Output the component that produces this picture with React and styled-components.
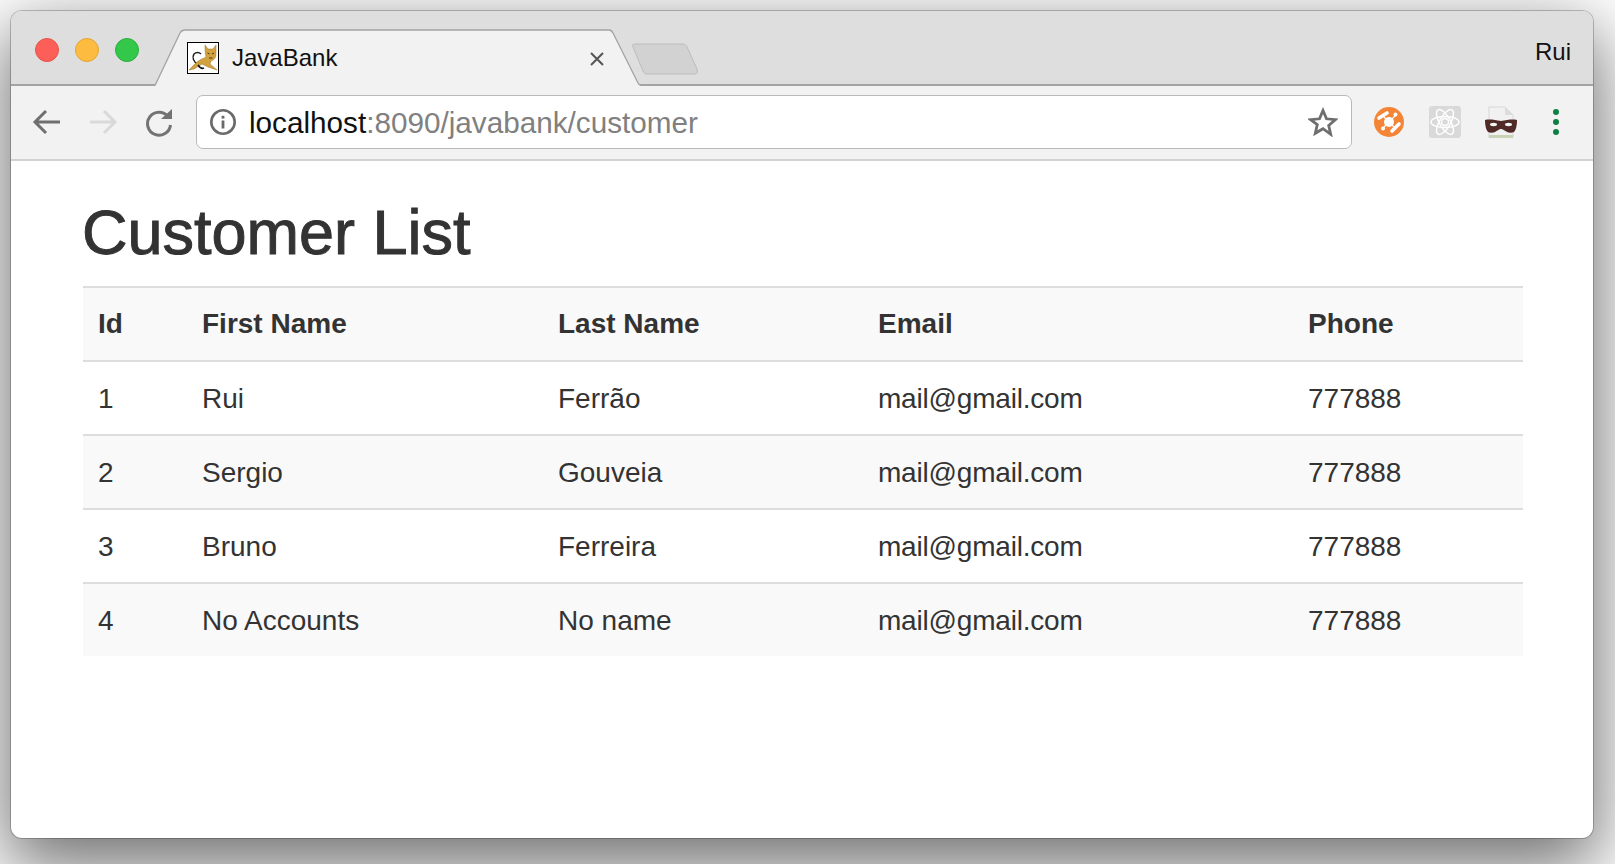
import React from "react";
import styled, { createGlobalStyle } from "styled-components";

const Global = createGlobalStyle`
  html, body { margin: 0; padding: 0; background: #fff; }
  body { font-family: "Liberation Sans", Arial, sans-serif; overflow: hidden; }
`;

const Desktop = styled.div`
  width: 1615px;
  height: 864px;
  padding: 11px 22px 26px 11px;
  box-sizing: border-box;
  overflow: hidden;
`;

const BrowserWindow = styled.div`
  height: 827px;
  width: 1582px;
  border-radius: 11px;
  background: #fff;
  display: flex;
  flex-direction: column;
  overflow: hidden;
  box-shadow: 0 0 0 1px rgba(0, 0, 0, 0.22), 0 24px 70px 6px rgba(0, 0, 0, 0.56);
`;

const TitleBar = styled.div`
  height: 75px;
  box-sizing: border-box;
  flex: none;
  background: #dedede;
  border-bottom: 2px solid #a3a3a3;
  display: flex;
  align-items: flex-end;
  padding: 0 22px 0 24px;
`;

const Lights = styled.div`
  display: flex;
  gap: 16px;
  align-self: flex-start;
  margin-top: 27px;
`;

const Light = styled.span`
  width: 24px;
  height: 24px;
  border-radius: 50%;
  box-sizing: border-box;
  background: ${(p) => p.$fill};
  border: 1px solid ${(p) => p.$edge};
`;

const Tab = styled.div`
  position: relative;
  width: 486px;
  height: 57px;
  margin: 0 0 -2px 16px;
  display: flex;
  align-items: center;
  padding: 0 36px 0 32px;
  box-sizing: border-box;
  color: #111;
  font-size: 24px;
`;

const TabShape = styled.svg`
  position: absolute;
  left: 0;
  top: 0;
  width: 486px;
  height: 57px;
`;

const Favicon = styled.svg`
  position: relative;
  width: 32px;
  height: 32px;
  flex: none;
  margin-top: 1px;
`;

const TabTitle = styled.span`
  position: relative;
  margin-left: 13px;
  flex: 1;
`;

const CloseIcon = styled.svg`
  position: relative;
  width: 14px;
  height: 14px;
  flex: none;
  margin-top: 2px;
  margin-right: 1px;
`;

const NewTab = styled.svg`
  width: 68px;
  height: 34px;
  flex: none;
  margin: 0 0 8px -10px;
`;

const UserName = styled.span`
  margin-left: auto;
  align-self: flex-start;
  margin-top: 27px;
  font-size: 24px;
  line-height: 28px;
  color: #111;
`;

const ToolBar = styled.div`
  height: 75px;
  flex: none;
  box-sizing: border-box;
  background: #f2f2f2;
  border-bottom: 2px solid #d2d2d2;
  display: flex;
  align-items: center;
  padding: 0 0 1px 0;
`;

const NavIcon = styled.svg`
  width: 30px;
  height: 30px;
  flex: none;
  margin-left: ${(p) => p.$gap}px;
`;

const Omnibox = styled.div`
  width: 1156px;
  height: 54px;
  margin-left: 22px;
  box-sizing: border-box;
  flex: none;
  background: #fff;
  border: 1px solid #b9b9b9;
  border-radius: 7px;
  display: flex;
  align-items: center;
  padding: 0 13px 0 12px;
`;

const InfoIcon = styled.svg`
  width: 28px;
  height: 28px;
  flex: none;
`;

const Url = styled.div`
  margin-left: 12px;
  padding-top: 1px;
  flex: 1;
  font-size: 29.7px;
  color: #808080;
  white-space: nowrap;
`;

const UrlHost = styled.span`
  color: #111;
`;

const StarIcon = styled.svg`
  width: 30px;
  height: 30px;
  flex: none;
`;

const Extensions = styled.div`
  display: flex;
  align-items: center;
  gap: 24px;
  margin-left: 21px;
`;

const ExtIcon = styled.svg`
  width: 32px;
  height: 32px;
  flex: none;
`;

const MenuDots = styled.div`
  display: flex;
  flex-direction: column;
  gap: 4px;
  margin-left: 12px;
`;

const MenuDot = styled.span`
  width: 6px;
  height: 6px;
  border-radius: 50%;
  background: #0b8043;
`;

const Page = styled.main`
  flex: 1;
  padding: 0 70px 0 72px;
  color: #333;
`;

const Heading = styled.h1`
  margin: 0 0 0 -1px;
  height: 125px;
  box-sizing: border-box;
  padding-top: 36px;
  font-size: 63px;
  line-height: 70px;
  font-weight: 400;
  color: #333;
  -webkit-text-stroke: 1px #333;
`;

const Table = styled.table`
  width: 1440px;
  table-layout: fixed;
  border-collapse: collapse;
  font-size: 28px;
  border-top: 2px solid #ddd;
`;

const HeadCell = styled.th`
  height: 72px;
  padding: 0 0 0 15px;
  text-align: left;
  font-weight: 700;
  color: #333;
  border-bottom: 2px solid #ddd;
`;

const Row = styled.tr`
  background: ${(p) => (p.$striped ? "#f9f9f9" : "#fff")};
`;

const Cell = styled.td`
  height: 70px;
  padding: 2px 0 0 15px;
  color: #333;
  border-top: 2px solid #ddd;
  letter-spacing: ${(p) => p.$tracking || 0}px;
`;

const customers = [
  { id: 1, first: "Rui", last: "Ferrão" },
  { id: 2, first: "Sergio", last: "Gouveia" },
  { id: 3, first: "Bruno", last: "Ferreira" },
  { id: 4, first: "No Accounts", last: "No name" },
];

const columns = [
  { name: "Id", width: 104 },
  { name: "First Name", width: 356 },
  { name: "Last Name", width: 320 },
  { name: "Email", width: 430 },
  { name: "Phone", width: 230 },
];

const TomcatIcon = () => (
  <Favicon viewBox="0 0 32 32">
    <rect x="0.5" y="0.5" width="31" height="31" fill="#fff" stroke="#000" />
    <path d="M11 22C6 20 5 15 7 12c2-2 5-2 7 0" fill="none" stroke="#222" strokeWidth="1.500" />
    <path d="M18 3l3 4h5l3-4v9c0 4-2 6-5 7l-1 3 7 6-9-3-6-3-8 5-5 1c4-4 7-8 11-10 3-2 5-2 6-3-1-4-1-8-1-12z" fill="#d2a23f" stroke="#96722a" strokeWidth="0.500" />
    <path d="M20.500 11l2 1M27 11l-2 1M22 16h3.500" stroke="#4a3512" strokeWidth="1" />
    <path d="M11 23c2 3 4 4 6 3" fill="none" stroke="#111" strokeWidth="1.500" />
  </Favicon>
);

const OrangeExt = () => (
  <ExtIcon viewBox="0 0 32 32">
    <circle cx="16" cy="16" r="15" fill="#f58536" />
    <path d="M9 9l14 14M23 9L9 23" stroke="#fff" strokeWidth="1.200" />
    <circle cx="16" cy="16" r="5" fill="#fff" />
    <path d="M6 12l8-5M19 25l7-7" stroke="#fff" strokeWidth="3.600" strokeLinecap="round" />
    <circle cx="22.500" cy="8.500" r="2" fill="#fff" />
    <circle cx="10" cy="22.500" r="2" fill="#fff" />
  </ExtIcon>
);

const ReactExt = () => (
  <ExtIcon viewBox="0 0 32 32">
    <rect width="32" height="32" rx="3" fill="#d9d9d9" />
    <g fill="none" stroke="#fff" strokeWidth="1.500">
      <ellipse cx="16" cy="16" rx="14" ry="5.500" />
      <ellipse cx="16" cy="16" rx="14" ry="5.500" transform="rotate(60 16 16)" />
      <ellipse cx="16" cy="16" rx="14" ry="5.500" transform="rotate(120 16 16)" />
      <circle cx="16" cy="16" r="3.500" />
    </g>
  </ExtIcon>
);

const MaskExt = () => (
  <ExtIcon viewBox="0 0 32 32">
    <path d="M4 1h16l8 8v23H4z" fill="#f1f1f1" stroke="#d6d6d6" />
    <path d="M20 1v8h8z" fill="#dcdcdc" />
    <rect x="4" y="29" width="24" height="3" fill="#c9d3b5" />
    <path d="M0 14c5-1 10 0 16 1 6-1 11-2 16-1 0 5-1 10-3 12-2 1-5 1-7 0-2-1-4-3-6-3s-4 2-6 3c-2 1-5 1-7 0-2-2-3-7-3-12z" fill="#4f2a26" />
    <ellipse cx="8.500" cy="18.500" rx="3.500" ry="1.700" fill="#f4f4f4" />
    <ellipse cx="23.500" cy="18.500" rx="3.500" ry="1.700" fill="#f4f4f4" />
  </ExtIcon>
);

export default function App() {
  return (
    <>
      <Global />
      <Desktop>
        <BrowserWindow>
          <TitleBar>
            <Lights>
              <Light $fill="#fc5f57" $edge="#e5534b" />
              <Light $fill="#fdbc40" $edge="#e3a631" />
              <Light $fill="#34c84a" $edge="#2cad3e" />
            </Lights>
            <Tab>
              <TabShape viewBox="0 0 486 57">
                <path d="M0 57L25 4C26 2 28 1 30 1H454C456 1 457 2 458 4L484 56L486 57Z" fill="#f2f2f2" />
                <path d="M0 56.500L25 4C26 2 28 1 30 1H454C456 1 457 2 458 4L483 54C484 56 485 56 486 56" fill="none" stroke="#a3a3a3" strokeWidth="1.300" />
              </TabShape>
              <TomcatIcon />
              <TabTitle>JavaBank</TabTitle>
              <CloseIcon viewBox="0 0 14 14">
                <path d="M1 1l12 12M13 1L1 13" stroke="#555" strokeWidth="2" />
              </CloseIcon>
            </Tab>
            <NewTab viewBox="0 0 68 34">
              <path d="M2 5C1 3 2 2 4 2H52C54 2 55 3 56 5L66 27C67 30 66 32 64 32H16C14 32 13 31 12 29Z" fill="#d2d2d2" stroke="#bcbcbc" />
            </NewTab>
            <UserName>Rui</UserName>
          </TitleBar>
          <ToolBar>
            <NavIcon $gap={21} viewBox="0 0 30 30">
              <path d="M28 15H4M14 4L3 15l11 11" fill="none" stroke="#6f6f6f" strokeWidth="3" />
            </NavIcon>
            <NavIcon $gap={26} viewBox="0 0 30 30">
              <path d="M2 15h24M16 4l11 11-11 11" fill="none" stroke="#d9d9d9" strokeWidth="3" />
            </NavIcon>
            <NavIcon $gap={26} viewBox="0 0 30 30">
              <path d="M24 9.500A11.500 11.500 0 1 0 26.500 18" fill="none" stroke="#737373" strokeWidth="3" />
              <path d="M17 12L28 2v10z" fill="#737373" />
            </NavIcon>
            <Omnibox>
              <InfoIcon viewBox="0 0 28 28">
                <circle cx="14" cy="14" r="11.700" fill="none" stroke="#6a6a6a" strokeWidth="2.600" />
                <rect x="12.600" y="12.500" width="2.800" height="8" fill="#6a6a6a" />
                <rect x="12.600" y="7.800" width="2.800" height="2.800" fill="#6a6a6a" />
              </InfoIcon>
              <Url>
                <UrlHost>localhost</UrlHost>:8090/javabank/customer
              </Url>
              <StarIcon viewBox="0 0 30 30">
                <path d="M15 3.500l3.500 8.300 9 .8-6.800 5.900 2 8.800L15 21.700 7.300 26.300l2-8.800L2.500 12.600l9-.8z" fill="none" stroke="#6f6f6f" strokeWidth="2.800" strokeLinejoin="miter" />
              </StarIcon>
            </Omnibox>
            <Extensions>
              <OrangeExt />
              <ReactExt />
              <MaskExt />
              <MenuDots>
                <MenuDot />
                <MenuDot />
                <MenuDot />
              </MenuDots>
            </Extensions>
          </ToolBar>
          <Page>
            <Heading>Customer List</Heading>
            <Table>
              <colgroup>
                {columns.map((c) => (
                  <col key={c.name} style={{ width: c.width }} />
                ))}
              </colgroup>
              <thead>
                <Row $striped>
                  {columns.map((c) => (
                    <HeadCell key={c.name}>{c.name}</HeadCell>
                  ))}
                </Row>
              </thead>
              <tbody>
                {customers.map((c, i) => (
                  <Row key={c.id} $striped={i % 2 === 1}>
                    <Cell>{c.id}</Cell>
                    <Cell>{c.first}</Cell>
                    <Cell>{c.last}</Cell>
                    <Cell $tracking={-0.2}>mail@gmail.com</Cell>
                    <Cell>777888</Cell>
                  </Row>
                ))}
              </tbody>
            </Table>
          </Page>
        </BrowserWindow>
      </Desktop>
    </>
  );
}
